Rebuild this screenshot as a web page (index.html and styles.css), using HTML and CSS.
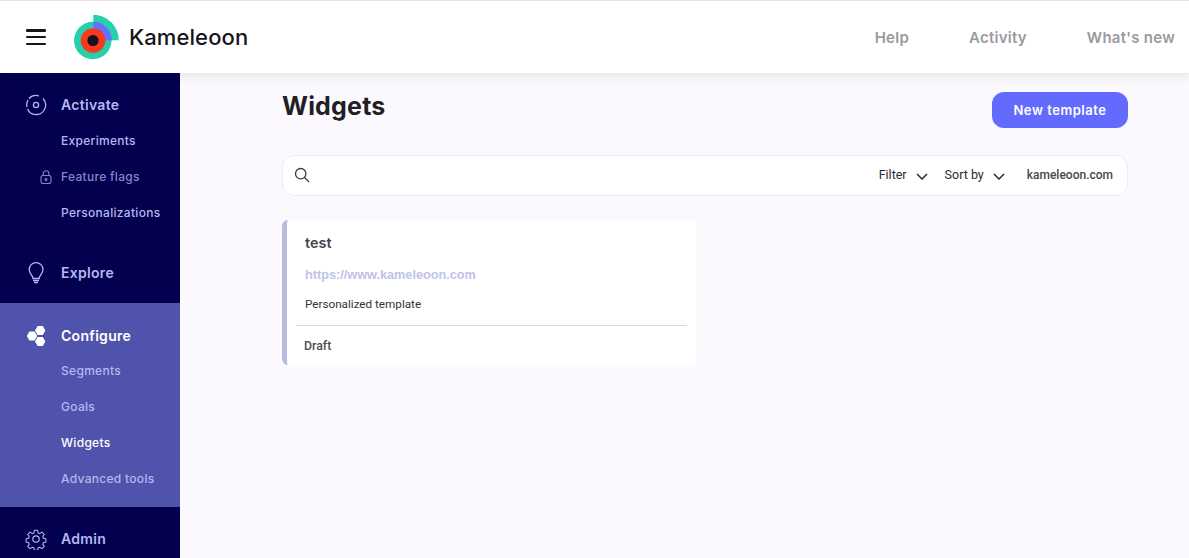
FILE: index.html
```html
<!DOCTYPE html>
<html lang="en">
<head>
<meta charset="utf-8">
<title>Widgets</title>
<link rel="stylesheet" href="styles.css">
</head>
<body>
<div class="app">
  <header class="topbar">
    <button class="burger" aria-label="Menu"><span></span><span></span><span></span></button>
    <div class="brand">
      <svg class="logo" width="47" height="46" viewBox="0 0 47 46">
        <path d="M20.300 .8A25.500 25.500 0 0 1 45.800 26.300L20.300 26.300Z" fill="#26d0ac"/>
        <circle cx="19.800" cy="26.500" r="18.700" fill="#26d0ac"/>
        <path d="M20.300 7.800A18.500 18.500 0 0 1 38.800 26.300L20.300 26.300Z" fill="#6b6dff"/>
        <circle cx="20" cy="26.500" r="12.300" fill="#f8391f"/>
        <circle cx="20" cy="26.500" r="5.600" fill="#15121a"/>
      </svg>
      <span class="brand-name">Kameleoon</span>
    </div>
    <nav class="topnav">
      <a>Help</a>
      <a>Activity</a>
      <a>What's new</a>
    </nav>
  </header>
  <div class="body">
    <aside class="sidebar">
      <section class="group group-activate">
        <div class="group-head">
          <svg class="nav-icon" width="22" height="22" viewBox="0 0 22 22" fill="none" stroke="#b5b8f0" stroke-width="1.300"><path d="M4 4.500A9.500 9.500 0 0 1 14 2M18 4.500A9.500 9.500 0 0 1 12 20.500A9.500 9.500 0 0 1 2.500 15M2 13A9.500 9.500 0 0 1 3 6"/><circle cx="11" cy="11" r="2.600"/></svg>
          <span>Activate</span>
        </div>
        <a class="sub">Experiments</a>
        <a class="sub locked">
          <svg class="lock" width="12" height="14" viewBox="0 0 12 14" fill="none" stroke="#8486cf" stroke-width="1.100"><rect x="1" y="5.500" width="10" height="8" rx="2"/><path d="M3.200 5.500V3.600a2.800 2.800 0 0 1 5.600 0v1.900"/><circle cx="6" cy="9.500" r="1"/></svg>
          Feature flags
        </a>
        <a class="sub">Personalizations</a>
      </section>
      <section class="group group-explore">
        <div class="group-head">
          <svg class="nav-icon" width="22" height="24" viewBox="0 0 22 24" fill="none" stroke="#b5b8f0" stroke-width="1.300"><path d="M8 17.500c0-3-3.800-4.500-3.800-9a6.900 6.900 0 0 1 13.800 0c0 4.500-3.800 6-3.800 9Z"/><path d="M8 19.500h6M9 21.500h4" stroke-width="1.600"/></svg>
          <span>Explore</span>
        </div>
      </section>
      <section class="group group-configure">
        <div class="group-head">
          <svg class="nav-icon" width="22" height="22" viewBox="0 0 22 22" fill="#fff"><path d="M10 5.500 12.600 1h5.200l2.600 4.500-2.600 4.500h-5.200ZM1.800 11 4.400 6.500h5.200L12.200 11l-2.600 4.500H4.400ZM10 16.500l2.600-4.500h5.200l2.600 4.500-2.600 4.500h-5.200Z"/></svg>
          <span>Configure</span>
        </div>
        <a class="sub">Segments</a>
        <a class="sub">Goals</a>
        <a class="sub current">Widgets</a>
        <a class="sub">Advanced tools</a>
      </section>
      <section class="group group-admin">
        <div class="group-head">
          <svg class="nav-icon" width="22" height="22" viewBox="0 0 24 24" fill="none" stroke="#b5b8f0" stroke-width="1.300" stroke-linejoin="round"><circle cx="12" cy="12" r="3.500"/><path d="M10 1.500h4l.6 3.200 1.900.8 2.700-1.800 2.800 2.800-1.800 2.700.8 1.900 3 .6v4l-3 .6-.8 1.900 1.800 2.700-2.800 2.800-2.700-1.800-1.900.8-.6 3h-4l-.6-3-1.900-.8-2.700 1.800-2.800-2.800 1.800-2.700-.8-1.900-3-.6v-4l3-.6.8-1.900-1.800-2.700 2.800-2.800 2.700 1.800 1.900-.8Z" transform="translate(1.200 1.200) scale(.9)"/></svg>
          <span>Admin</span>
        </div>
      </section>
    </aside>
    <main class="content">
      <div class="title-row">
        <h1>Widgets</h1>
        <button class="primary">New template</button>
      </div>
      <div class="searchbar">
        <svg class="search-icon" width="16" height="16" viewBox="0 0 16 16" fill="none" stroke="#3b3b40" stroke-width="1.300"><circle cx="6.700" cy="6.700" r="5.200"/><path d="M10.500 10.500 15 15"/></svg>
        <div class="tools">
          <span class="tool">Filter <svg width="12" height="7" viewBox="0 0 12 7" fill="none" stroke="#2b2b30" stroke-width="1.500"><path d="M1 1l5 5 5-5"/></svg></span>
          <span class="tool">Sort by <svg width="12" height="7" viewBox="0 0 12 7" fill="none" stroke="#2b2b30" stroke-width="1.500"><path d="M1 1l5 5 5-5"/></svg></span>
          <span class="site">kameleoon.com</span>
        </div>
      </div>
      <article class="card">
        <div class="card-top">
          <h2>test</h2>
          <a class="url">https://www.kameleoon.com</a>
          <p>Personalized template</p>
        </div>
        <div class="card-foot">Draft</div>
      </article>
    </main>
  </div>
</div>
</body>
</html>
```

FILE: styles.css
```css
* { box-sizing: border-box; }
html, body { margin: 0; height: 100%; overflow: hidden; }
body { font-family: Inter, "Open Sans", sans-serif; background: #fbf9fd; }
a { text-decoration: none; }

.app { display: flex; flex-direction: column; height: 558px; }

.topbar {
  position: relative;
  z-index: 2;
  flex: none;
  height: 73px;
  display: flex;
  align-items: center;
  background: #fff;
  border-top: 1px solid #e2e2e2;
  box-shadow: 0 2px 10px rgba(40, 30, 60, .12);
  padding: 0 14px 0 26px;
}
.burger {
  width: 20px;
  height: 16px;
  padding: 0;
  border: 0;
  background: none;
  display: flex;
  flex-direction: column;
  justify-content: space-between;
}
.burger span { display: block; height: 2.500px; background: #17151c; border-radius: 1px; }
.brand { display: flex; align-items: center; margin-left: 27px; }
.logo { flex: none; }
.brand-name {
  margin-left: 9px;
  font-size: 22px;
  font-weight: 500;
  color: #17151c;
  letter-spacing: .1px;
}
.topnav { margin-left: auto; display: flex; gap: 60px; }
.topnav a {
  font-size: 15px;
  font-weight: 600;
  color: #9b9a9e;
  letter-spacing: .25px;
}

.body { flex: 1; display: flex; min-height: 0; }

.sidebar {
  flex: none;
  width: 180px;
  background: #02004f;
  display: flex;
  flex-direction: column;
  color: #b5b8f0;
}
.group-head {
  height: 36px;
  display: flex;
  align-items: center;
  padding: 0 0 2px 61px;
  position: relative;
  font-size: 14px;
  font-weight: 600;
  letter-spacing: .3px;
}
.nav-icon { position: absolute; left: 25px; top: 50%; transform: translateY(-50%); }
.sub {
  display: flex;
  align-items: center;
  height: 36px;
  padding: 0 0 2px 61px;
  position: relative;
  font-size: 12px;
  font-weight: 500;
  letter-spacing: .3px;
  color: #b5b8f0;
}
.lock { position: absolute; left: 40px; top: 50%; transform: translateY(-50%); }
.locked { color: #8486cf; }
.current { color: #fff; }

.group-activate { padding-top: 14px; }
.group-explore { margin-top: 24px; }
.group-configure {
  margin-top: 12px;
  height: 204px;
  padding-top: 15px;
  background: #5053ab;
}
.group-configure .group-head { color: #fff; margin-bottom: -1px; }
.group-admin { padding-top: 14px; }

.content { flex: 1; min-width: 0; padding: 19px 61px 0 102px; }
.title-row { display: flex; justify-content: space-between; align-items: flex-start; }
h1 {
  margin: 0;
  font-size: 25px;
  line-height: 28px;
  font-weight: 700;
  color: #211f26;
  letter-spacing: .2px;
}
.primary {
  width: 136px;
  height: 36px;
  border: 0;
  border-radius: 12px;
  background: #636bff;
  color: #fff;
  font-family: inherit;
  font-size: 13px;
  font-weight: 600;
  letter-spacing: .55px;
}
.searchbar {
  margin-top: 27px;
  height: 41px;
  display: flex;
  align-items: center;
  background: #fff;
  border: 1px solid #ececf0;
  border-radius: 12px;
  padding: 0 14px 2px 11px;
}
.tools {
  margin-left: auto;
  display: flex;
  align-items: center;
  font-family: Roboto, sans-serif;
  font-size: 12.500px;
  color: #2b2b30;
}
.tool { display: flex; align-items: center; gap: 9px; margin-right: 17px; }
.tool svg { margin-top: 3px; }
.site { margin-left: 5px; font-size: 12px; color: #47474c; font-weight: 500; }

.card {
  margin-top: 24px;
  width: 414px;
  height: 145px;
  background: #fff;
  border-left: 5px solid #b8bbe0;
  border-radius: 6px 0 0 6px;
  font-family: Roboto, sans-serif;
}
.card-top { margin-left: 9px; margin-right: 9px; height: 106px; padding: 14px 0 0 9px; border-bottom: 1px solid #d9d9de; }
h2 {
  margin: 0;
  font-family: Inter, sans-serif;
  font-size: 14.500px;
  line-height: 18px;
  font-weight: 600;
  color: #46454a;
}
.url {
  display: block;
  margin-top: 15px;
  font-family: "Liberation Sans", sans-serif;
  font-size: 12.700px;
  line-height: 16px;
  font-weight: 700;
  color: #c0c3e8;
}
.card-top p {
  margin: 14px 0 0;
  font-size: 11.700px;
  line-height: 14px;
  color: #333338;
}
.card-foot {
  margin-left: 17px;
  padding-top: 12px;
  font-size: 12.300px;
  line-height: 16px;
  font-weight: 500;
  color: #4b4b50;
}
```
